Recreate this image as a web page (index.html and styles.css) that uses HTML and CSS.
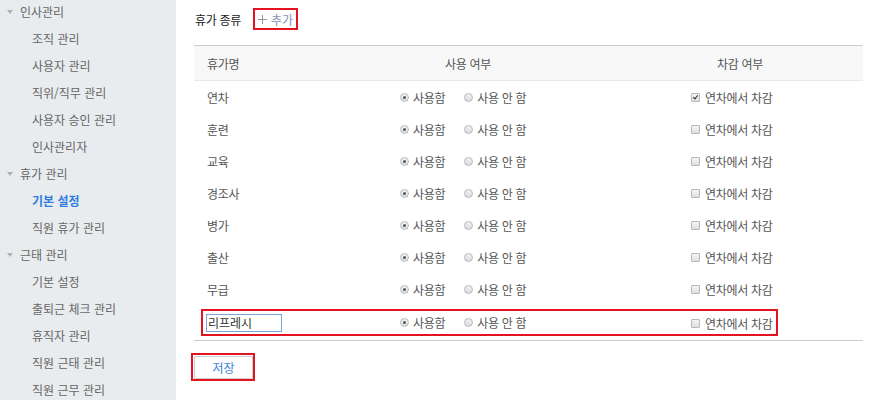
FILE: index.html
```html
<!DOCTYPE html>
<html lang="ko">
<head>
  <meta charset="UTF-8">
  <title>휴가 종류 - 기본 설정</title>
  <link rel="stylesheet" href="styles.css">
</head>
<body>
  <aside class="sidebar">
    <ul class="menu">
      <li class="group">인사관리</li>
      <li>조직 관리</li>
      <li>사용자 관리</li>
      <li>직위/직무 관리</li>
      <li>사용자 승인 관리</li>
      <li>인사관리자</li>
      <li class="group">휴가 관리</li>
      <li class="active">기본 설정</li>
      <li>직원 휴가 관리</li>
      <li class="group">근태 관리</li>
      <li>기본 설정</li>
      <li>출퇴근 체크 관리</li>
      <li>휴직자 관리</li>
      <li>직원 근태 관리</li>
      <li>직원 근무 관리</li>
    </ul>
  </aside>

  <main class="content">
    <div class="toolbar">
      <h2 class="title">휴가 종류</h2>
      <span class="mark add-mark">
        <a class="add-link">
          <svg width="9" height="9" viewBox="0 0 9 9"><path d="M4.5 0v9M0 4.5h9" stroke="#999" stroke-width="1"/></svg>
          추가
        </a>
      </span>
    </div>

    <div class="table">
      <div class="row head">
        <div class="cell name">휴가명</div>
        <div class="cell center">사용 여부</div>
        <div class="cell center">차감 여부</div>
      </div>

      <div class="row">
        <div class="cell name">연차</div>
        <div class="cell use">
          <span class="opt"><i class="radio on"></i>사용함</span>
          <span class="opt"><i class="radio"></i>사용 안 함</span>
        </div>
        <div class="cell deduct"><span class="opt"><i class="check on"></i>연차에서 차감</span></div>
      </div>

      <div class="row">
        <div class="cell name">훈련</div>
        <div class="cell use">
          <span class="opt"><i class="radio on"></i>사용함</span>
          <span class="opt"><i class="radio"></i>사용 안 함</span>
        </div>
        <div class="cell deduct"><span class="opt"><i class="check"></i>연차에서 차감</span></div>
      </div>

      <div class="row">
        <div class="cell name">교육</div>
        <div class="cell use">
          <span class="opt"><i class="radio on"></i>사용함</span>
          <span class="opt"><i class="radio"></i>사용 안 함</span>
        </div>
        <div class="cell deduct"><span class="opt"><i class="check"></i>연차에서 차감</span></div>
      </div>

      <div class="row">
        <div class="cell name">경조사</div>
        <div class="cell use">
          <span class="opt"><i class="radio on"></i>사용함</span>
          <span class="opt"><i class="radio"></i>사용 안 함</span>
        </div>
        <div class="cell deduct"><span class="opt"><i class="check"></i>연차에서 차감</span></div>
      </div>

      <div class="row">
        <div class="cell name">병가</div>
        <div class="cell use">
          <span class="opt"><i class="radio on"></i>사용함</span>
          <span class="opt"><i class="radio"></i>사용 안 함</span>
        </div>
        <div class="cell deduct"><span class="opt"><i class="check"></i>연차에서 차감</span></div>
      </div>

      <div class="row">
        <div class="cell name">출산</div>
        <div class="cell use">
          <span class="opt"><i class="radio on"></i>사용함</span>
          <span class="opt"><i class="radio"></i>사용 안 함</span>
        </div>
        <div class="cell deduct"><span class="opt"><i class="check"></i>연차에서 차감</span></div>
      </div>

      <div class="row">
        <div class="cell name">무급</div>
        <div class="cell use">
          <span class="opt"><i class="radio on"></i>사용함</span>
          <span class="opt"><i class="radio"></i>사용 안 함</span>
        </div>
        <div class="cell deduct"><span class="opt"><i class="check"></i>연차에서 차감</span></div>
      </div>

      <div class="row new-row">
        <div class="cell name"><input class="name-input" type="text" value="리프레시"></div>
        <div class="cell use">
          <span class="opt"><i class="radio on"></i>사용함</span>
          <span class="opt"><i class="radio"></i>사용 안 함</span>
        </div>
        <div class="cell deduct"><span class="opt"><i class="check"></i>연차에서 차감</span></div>
        <div class="mark row-mark"></div>
      </div>
    </div>

    <div class="actions">
      <span class="mark save-mark"><button class="save">저장</button></span>
    </div>
  </main>
</body>
</html>
```

FILE: styles.css
```css
html, body {
  margin: 0;
  padding: 0;
}

body {
  display: flex;
  min-height: 100vh;
  font-family: "Noto Sans CJK KR", sans-serif;
  font-size: 12px;
  color: #555;
  background: #fff;
}

/* sidebar */
.sidebar {
  width: 176px;
  flex-shrink: 0;
  background: #e9ecef;
  overflow: hidden;
}

.menu {
  list-style: none;
  margin: -2px 0 0;
  padding: 0;
}

.menu li {
  height: 27px;
  line-height: 27px;
  padding-left: 32px;
  color: #666;
  white-space: nowrap;
}

.menu li.group {
  position: relative;
  padding-left: 20px;
}

.menu li.group::before {
  content: "";
  position: absolute;
  left: 7px;
  top: 12px;
  border-left: 3px solid transparent;
  border-right: 3px solid transparent;
  border-top: 4px solid #b0b0b0;
}

.menu li.active {
  color: #2f7ce0;
  font-weight: bold;
}

/* content */
.content {
  flex: 1;
  padding: 0 17px 0 18px;
}

.toolbar {
  display: flex;
  align-items: center;
  height: 38px;
  margin-bottom: 7px;
}

.title {
  margin: 0 0 0 1px;
  font-size: 12px;
  font-weight: normal;
  color: #222;
  letter-spacing: -0.3px;
}

.mark {
  border: 2px solid #e3141f;
  box-sizing: border-box;
}

.add-mark {
  display: inline-flex;
  align-items: center;
  height: 22px;
  margin-left: 12px;
  padding: 0 3px 0 3px;
}

.add-link {
  display: inline-flex;
  align-items: center;
  gap: 4px;
  color: #8396b3;
  cursor: pointer;
}

/* table */
.table {
  border-top: 1px solid #cbcbcb;
  border-bottom: 1px solid #cbcbcb;
}

.row {
  display: grid;
  grid-template-columns: 125px 298px 1fr;
  align-items: center;
  height: 32px;
  letter-spacing: -0.3px;
}

.row.head {
  height: 34px;
  background: #f8f8f8;
  border-bottom: 1px solid #e8e8e8;
  color: #555;
}

.cell.name {
  padding-left: 13px;
}

.cell.center {
  text-align: center;
}

.cell.use {
  padding-left: 81px;
  display: flex;
  gap: 19px;
}

.cell.deduct {
  padding-left: 74px;
}

.opt {
  display: inline-flex;
  align-items: center;
  gap: 4px;
  white-space: nowrap;
}

.radio {
  display: inline-block;
  width: 9px;
  height: 9px;
  box-sizing: border-box;
  border: 1px solid #b9b9b9;
  border-radius: 50%;
  background: linear-gradient(#f2f2f2, #dcdcdc);
  position: relative;
}

.radio.on::after {
  content: "";
  position: absolute;
  left: 2px;
  top: 2px;
  width: 3px;
  height: 3px;
  border-radius: 50%;
  background: #555;
}

.check {
  display: inline-block;
  width: 9px;
  height: 9px;
  box-sizing: border-box;
  border: 1px solid #b9b9b9;
  border-radius: 1px;
  background: linear-gradient(#f4f4f4, #dedede);
  position: relative;
  margin-right: 1px;
}

.check.on::after {
  content: "";
  position: absolute;
  left: 2px;
  top: 0;
  width: 2px;
  height: 4px;
  border-right: 1.5px solid #333;
  border-bottom: 1.5px solid #333;
  transform: rotate(40deg);
}

.new-row {
  position: relative;
  height: 35px;
}

.new-row .cell.name {
  padding-left: 12px;
}

.name-input {
  width: 76px;
  height: 18px;
  box-sizing: border-box;
  border: 1px solid #7ea3d6;
  padding: 0 1px;
  font-family: "Noto Sans CJK KR", sans-serif;
  font-size: 12px;
  color: #333;
  outline: none;
}

.row-mark {
  position: absolute;
  left: 7px;
  top: 4px;
  width: 577px;
  height: 27px;
}

/* actions */
.actions {
  padding-top: 12px;
  margin-left: -3px;
}

.save-mark {
  display: inline-block;
  padding: 1px 0 0 1px;
}

.save {
  width: 59px;
  height: 23px;
  border: 1px solid #cfcfcf;
  background: #fff;
  color: #3a7fd9;
  font-family: "Noto Sans CJK KR", sans-serif;
  font-size: 12px;
  padding: 0;
  cursor: pointer;
}
```
